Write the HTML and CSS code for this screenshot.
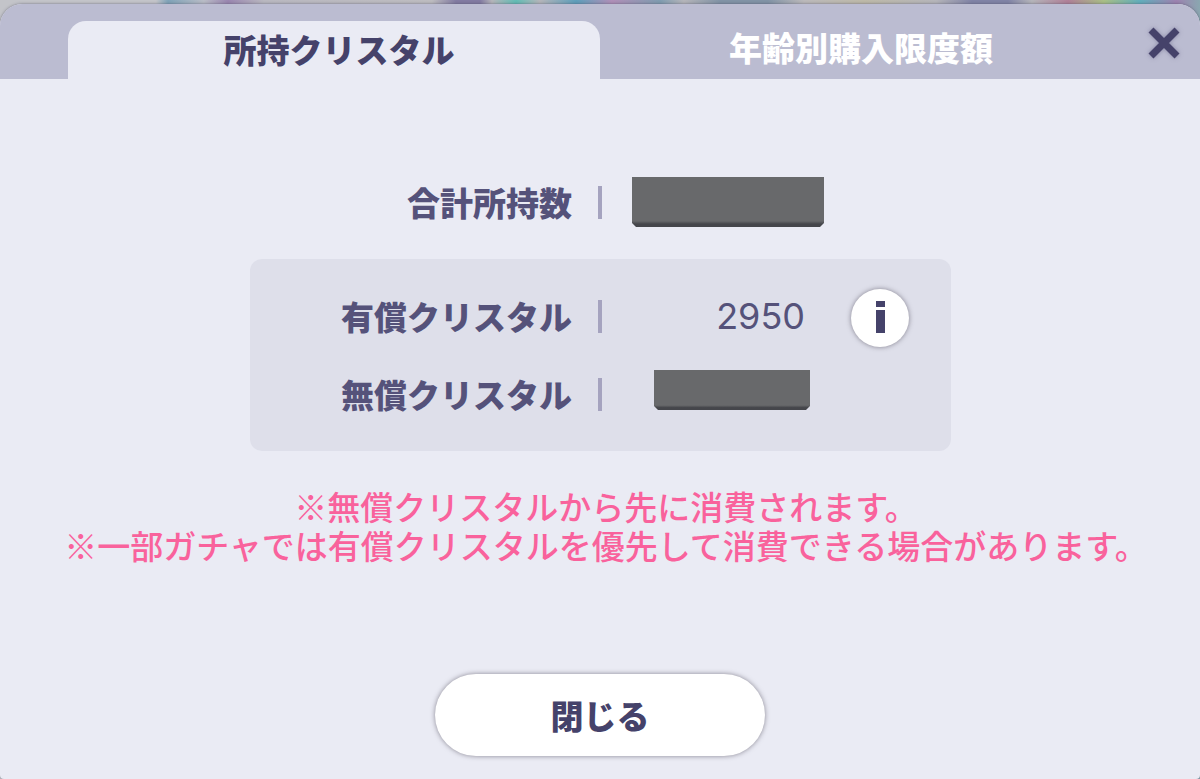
FILE: index.html
```html
<!DOCTYPE html>
<html lang="ja">
<head>
    <meta charset="UTF-8">
    <meta name="viewport" content="width=device-width, initial-scale=1.0">
    <title>所持クリスタル</title>
    <link rel="stylesheet" href="styles.css">
</head>
<body>
    <div class="dialog" role="dialog">
        <header class="dialog-header">
            <div class="tabs" role="tablist">
                <button class="tab active" id="tabOwned" type="button" role="tab" aria-selected="true" aria-controls="owned">所持クリスタル</button>
                <button class="tab" type="button" role="tab" aria-selected="false">年齢別購入限度額</button>
            </div>
            <button class="close-icon" type="button" aria-label="閉じる">
                <svg viewBox="0 0 34 34" width="34" height="34">
                    <path d="M3 4 L29 30 M29 4 L3 30" fill="none" stroke="#45426a" stroke-width="7"/>
                </svg>
            </button>
        </header>

        <main class="content" id="owned" role="tabpanel" aria-labelledby="tabOwned">
            <dl class="rows">
                <div class="row">
                    <dt>合計所持数</dt>
                    <dd><span class="amount"><span class="mask mask-large"></span></span></dd>
                </div>
            </dl>

            <dl class="rows breakdown">
                <div class="row">
                    <dt>有償クリスタル</dt>
                    <dd>
                        <span class="amount number">2950</span>
                        <button class="info" type="button" aria-label="詳細">
                            <svg viewBox="0 0 58 58" width="58" height="58">
                                <rect x="25" y="12" width="9" height="6" fill="#45426a"/>
                                <rect x="25" y="21" width="9" height="23" fill="#45426a"/>
                            </svg>
                        </button>
                    </dd>
                </div>
                <div class="row">
                    <dt>無償クリスタル</dt>
                    <dd><span class="amount free"><span class="mask"></span></span></dd>
                </div>
            </dl>

            <div class="notes">
                <p>※無償クリスタルから先に消費されます。</p>
                <p>※一部ガチャでは有償クリスタルを優先して消費できる場合があります。</p>
            </div>

            <button class="close-button" type="button">閉じる</button>
        </main>
    </div>
</body>
</html>
```

FILE: styles.css
```css
* {
    box-sizing: border-box;
}

body {
    margin: 0;
    padding-top: 4px;
    font-family: "Noto Sans CJK JP", sans-serif;
    font-size: 33px;
    color: #55527a;
    /* the game screen behind the dialog */
    background: linear-gradient(90deg, #c3c4c9 0, #c3c4c9 13%, #7fa3b8 14%, #b9bcc6 17%, #9a86b0 19%, #b9b8c0 22%, #bdbcc0 36%, #827ba2 38%, #827ba2 40%, #b5b5ba 41%, #62bdb5 43%, #b5b5ba 45%, #5e9fbb 48%, #b08fb8 51%, #7f9cb0 55%, #b5b5ba 57%, #8193a6 60%, #8193a6 64%, #bbb9bb 67%, #bdb9a8 72%, #b5b5ba 78%, #8083a6 81%, #8083a6 84%, #b5b5ba 86%, #b08098 89%, #a9bf86 92%, #62aebc 95%, #9d82b0 98%, #8aa7b0 100%);
}

button {
    padding: 0;
    border: none;
    background: none;
    font-family: inherit;
    font-size: inherit;
    color: inherit;
    cursor: pointer;
}

.dialog {
    min-height: calc(100vh - 4px);
    background: #eaebf4;
    border-radius: 22px 22px 4px 4px;
    box-shadow: 0 0 3px rgba(60, 60, 80, 0.6);
    overflow: hidden;
}

.dialog-header {
    display: flex;
    padding-left: 68px;
    background: #bbbcd1;
}

.tabs {
    display: flex;
    flex: 1;
    padding-top: 17px;
}

.tab {
    flex: 1;
    height: 58px;
    padding: 0 0 2px 10px;
    border-radius: 18px 18px 0 0;
    font-weight: 900;
    line-height: 56px;
    color: #fff;
}

.tab:not(.active) {
    padding: 0 8px 6px 0;
    line-height: 52px;
}

.tab.active {
    background: #eaebf4;
    color: #45426a;
}

.close-icon {
    width: 70px;
    height: 75px;
    padding-top: 2px;
}

.close-icon svg {
    display: block;
    margin: 0 auto;
    filter: drop-shadow(0 0 2px rgba(85, 82, 122, 0.5));
}

.content {
    display: flex;
    flex-direction: column;
    align-items: center;
    padding: 84px 24px 22px;
}

.rows {
    width: 100%;
    max-width: 701px;
    margin: 0;
}

.breakdown {
    margin-top: 18px;
    padding: 18px 0;
    background: #dedfea;
    border-radius: 12px;
}

.row {
    display: grid;
    grid-template-columns: 1fr 1fr;
    height: 78px;
}

dt {
    display: flex;
    align-items: center;
    justify-content: flex-end;
    gap: 26px;
    margin-right: -2px;
    font-weight: 900;
}

/* divider between label and value */
dt::after {
    content: "";
    width: 4px;
    height: 33px;
    background: #a5a3bf;
}

dd {
    display: flex;
    align-items: center;
    gap: 27px;
    margin: 0;
}

.amount {
    display: flex;
    justify-content: flex-end;
    width: 224px;
}

.number {
    padding-right: 19px;
    font-family: Inter, sans-serif;
    font-size: 36px;
}

.free {
    padding: 0 14px 8px 0;
}

.mask {
    width: 156px;
    height: 40px;
    background: linear-gradient(#68696b 88%, #45464b 94%);
    clip-path: polygon(0 0, 100% 0, 100% calc(100% - 4px), calc(100% - 4px) 100%, 4px 100%, 0 calc(100% - 4px));
}

.mask-large {
    width: 192px;
    height: 50px;
}

.info {
    width: 58px;
    height: 58px;
    margin-top: 4px;
    border-radius: 50%;
    background: #fff;
    box-shadow: 0 0 5px rgba(70, 65, 80, 0.6);
}

.info svg {
    display: block;
}

.notes {
    margin-top: 38px;
    padding-left: 12px;
    font-family: "Liberation Sans", "Noto Sans CJK JP", sans-serif;
    font-weight: 500;
    line-height: 39px;
    text-align: center;
    color: #f9629c;
}

.notes p {
    margin: 0;
}

.close-button {
    width: 330px;
    height: 82px;
    margin-top: 107px;
    border-radius: 41px;
    background: #fff;
    box-shadow: 0 0 5px rgba(70, 65, 80, 0.6);
    font-weight: 900;
    color: #45426a;
}
```
